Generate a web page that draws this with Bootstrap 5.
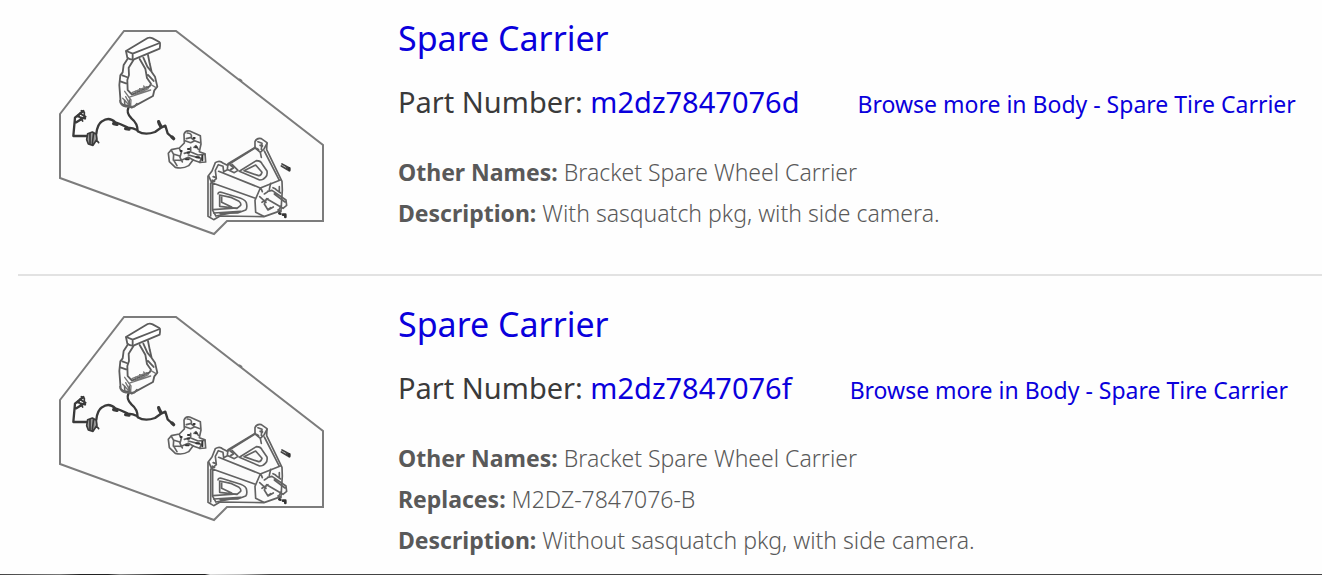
<!DOCTYPE html>
<html lang="en">
<head>
<meta charset="utf-8">
<meta name="viewport" content="width=device-width, initial-scale=1">
<title>Spare Carrier</title>
<link rel="stylesheet" href="https://cdn.jsdelivr.net/npm/bootstrap@5.3.0/dist/css/bootstrap.min.css">
<style>
body { font-family: "Noto Sans", "Open Sans", sans-serif; color: #595959; background: #fefefe; }
a { color: #0a00dc; text-decoration: none; }
.part-list { padding-left: 18px; }
.part { padding: 15px 0 37px 40px; }
.part + .part { border-top: 2px solid #e2e2e2; padding-top: 25px; padding-bottom: 13px; }
.part-figure { width: 268px; margin-top: 13px; margin-right: 72px; }
.part-title { font-size: 34px; line-height: 46px; margin: 0 0 17px; font-weight: 400; }
.part-number { font-size: 29px; line-height: 48px; color: #3a3a3a; margin-bottom: 24px; column-gap: 58px; }
.part-browse { font-size: 23px; }
.part-details { font-size: 23px; line-height: 41px; font-weight: 300; }
.part-details strong { font-weight: 700; }
.page-strip { height: 1px; background: linear-gradient(90deg, #444 0, #777 60px, #222 80px, #222 108px, #888 120px, #222 165px, #222 205px, #ddd 210px, #bbb 240px, #444 270px); }
</style>
</head>
<body>
<svg class="d-none" aria-hidden="true">
  <symbol id="carrier" viewBox="57 28 268 209">
    <path d="M123 31H175L322 145V221H226L213 234L59 178V114Z" fill="#fcfcfc" stroke="#7c7c7c" stroke-width="2"/>
    <path d="M238 79l3 2" stroke="#777" stroke-width="2"/>
    <!-- latch arm -->
    <g transform="translate(50 20) scale(.3333)" fill="none" stroke="#5c5c5c" stroke-width="5.5" stroke-linejoin="round" stroke-linecap="round">
      <path d="M225 93L290 54Q297 51 305 55L325 66Q329 69 326 86L249 118Q240 121 229 113Z" fill="#fff"/>
      <path d="M226 93L245 101L326 69M245 101V119"/>
      <path d="M231 115L218 135L215 157L208 166L205 195L209 248Q215 257 230 256L242 263L306 228L310 211L319 200L312 170L302 156L296 130L291 105"/>
      <path d="M247 121L233 143L234 165L229 180L230 210M266 117L283 146L288 174L300 191L296 199L243 224L231 211M277 113L289 140L299 152M291 165L308 183M214 166L227 171M208 184L225 190"/>
      <path d="M243 218L288 200M249 226L292 206M233 232L299 210M221 214L240 240L239 258M253 213l8 10M266 206l7 11M278 198l8 10M215 235l17 18M224 230l13 24M300 194l14 8" stroke="#777" stroke-width="4"/>
    </g>
    <!-- wiring harness -->
    <g transform="translate(50 100) scale(.3333)" fill="none" stroke="#3a3a3a" stroke-width="7" stroke-linejoin="round" stroke-linecap="round">
      <path d="M232 24Q225 39 242 56Q260 70 260 94Q282 107 312 96L332 82L343 77L350 100L362 111M260 91Q246 84 231 83L207 72L193 67Q174 49 153 64Q139 73 136 101M110 108H67L72 53L97 33M76 67L103 50"/>
      <path d="M323 65L325 71L330 80M188 71l10 2M224 86l10 1M363 111l5 5" stroke-width="10"/>
      <path d="M79 49L103 56M86 40L103 50M91 32L100 37V56M82 45L95 63" stroke-width="5"/>
      <path d="M110 101L124 96L136 103L138 118L126 136L112 132L107 119ZM117 99V131M128 98L124 130M137 121L143 128" stroke-width="5" fill="#999"/>
      <path d="M207 2Q208 17 225 20L250 20L258 11M221 1V18M235 0V22" stroke="#666" stroke-width="5"/>
    </g>
    <!-- latch motor and carrier bracket -->
    <g transform="translate(160 120) scale(.3333)" fill="none" stroke="#626262" stroke-width="5" stroke-linejoin="round" stroke-linecap="round">
      <path d="M69 43Q73 30 86 33L118 47L120 72L115 95L132 101L134 126L116 127L96 120L83 137Q65 148 43 142L25 125L22 100L31 89L55 84L70 69Z" fill="#fbfbfb"/>
      <path d="M79 39Q94 40 91 52L76 56M72 62L89 68L101 62L117 68M91 54L99 60M31 91L38 103L37 119L48 137M55 86L61 97L57 112L64 126M37 102L56 108M37 120L61 121L82 112L97 120M70 100L88 95L111 105L132 103M82 105L121 115L116 127M89 95V82M99 82L105 77L112 88"/>
      <path d="M59 93h3M81 87h4M80 98h4M104 82h3M98 54h3M106 112h8M75 118h8M124 107v14" stroke="#333" stroke-width="6"/>
      <path d="M282 84V65Q287 53 301 56L318 68L317 89L363 184L364 210L360 272L309 290L177 288L158 299L141 289V169L153 153L163 128Q176 119 187 130L199 136Z" fill="#fbfbfb"/>
      <path d="M283 82L201 131L199 149L188 155L186 139L172 134L163 151L166 176L152 188L144 170M283 84L298 97L309 87L318 70M291 65L303 70L301 88M298 97L301 112M310 93L354 179M201 149L220 158L231 151L213 133M152 188L283 235M173 154L298 204L358 180M298 204L282 241L284 277L308 289M300 205L304 215M149 190V288M155 191V271L164 287"/>
      <path d="M235 154L286 122Q299 122 303 131L318 153Q320 166 314 171Q307 180 296 180ZM249 152L284 135L303 157Q300 168 293 167ZM171 222Q171 215 181 217L239 235Q257 242 257 253Q259 266 254 270L230 279L177 280M176 225L209 232L234 244Q241 249 239 256L228 265L176 259ZM182 230V247L212 261M156 269L228 264M158 279L239 274M165 288L210 279"/>
      <path d="M320 214L333 211L375 240L377 256L366 265L317 236L310 252L321 270L337 261M296 230L315 247M303 247L321 236M325 208L329 190M355 200V214M344 208L359 219M340 222L372 246M329 263l-8 6M351 270l9 5M361 257l-7 12M336 203l8 4M310 222l12 -8"/>
      <path d="M208 135l9 7M209 149l8 -5M157 170l8 3M154 181l6 3M287 86l5 3M298 76l6 2" stroke-width="6"/>
      <path d="M363 132L384 143M361 138L381 150M374 138l9 10" stroke="#444" stroke-width="5"/>
      <path d="M385 145v6M355 280l3 1M366 284h7M373 285v6" stroke="#333" stroke-width="8"/>
    </g>
  </symbol>
</svg>

<main class="part-list overflow-hidden">
  <article class="part d-flex align-items-start">
    <svg class="part-figure flex-shrink-0" viewBox="0 0 268 209" role="img" aria-label="Spare carrier diagram"><use href="#carrier" width="268" height="209"/></svg>
    <div class="flex-grow-1">
      <h2 class="part-title"><a href="#">Spare Carrier</a></h2>
      <div class="part-number d-flex flex-wrap align-items-baseline">
        <span>Part Number: <a href="#">m2dz7847076d</a></span>
        <a class="part-browse" href="#">Browse more in Body - Spare Tire Carrier</a>
      </div>
      <div class="part-details">
        <div><strong>Other Names:</strong> Bracket Spare Wheel Carrier</div>
        <div><strong>Description:</strong> With sasquatch pkg, with side camera.</div>
      </div>
    </div>
  </article>
  <article class="part d-flex align-items-start">
    <svg class="part-figure flex-shrink-0" viewBox="0 0 268 209" role="img" aria-label="Spare carrier diagram"><use href="#carrier" width="268" height="209"/></svg>
    <div class="flex-grow-1">
      <h2 class="part-title"><a href="#">Spare Carrier</a></h2>
      <div class="part-number d-flex flex-wrap align-items-baseline">
        <span>Part Number: <a href="#">m2dz7847076f</a></span>
        <a class="part-browse" href="#">Browse more in Body - Spare Tire Carrier</a>
      </div>
      <div class="part-details">
        <div><strong>Other Names:</strong> Bracket Spare Wheel Carrier</div>
        <div><strong>Replaces:</strong> M2DZ-7847076-B</div>
        <div><strong>Description:</strong> Without sasquatch pkg, with side camera.</div>
      </div>
    </div>
  </article>
</main>
<div class="page-strip"></div>
<script src="https://cdn.jsdelivr.net/npm/bootstrap@5.3.0/dist/js/bootstrap.bundle.min.js"></script>
</body>
</html>
